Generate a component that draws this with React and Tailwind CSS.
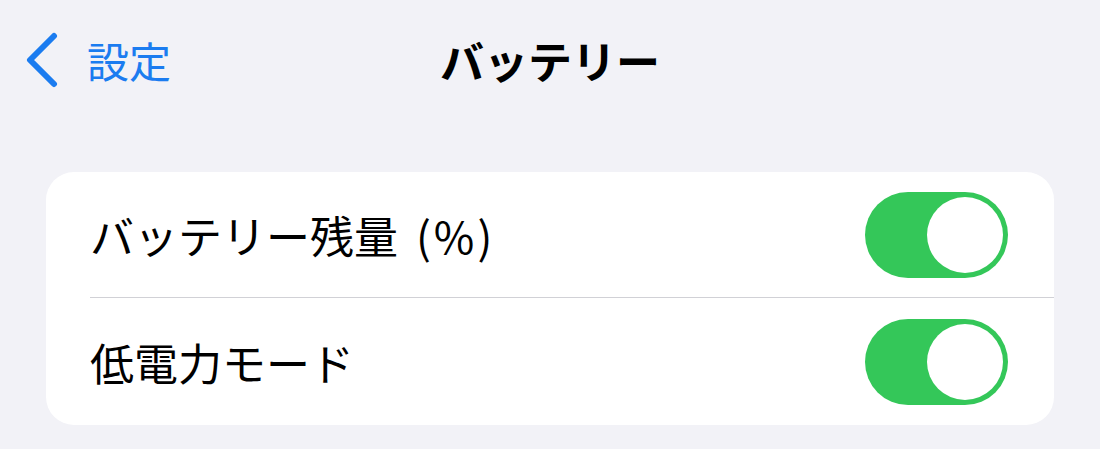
import React, { useState } from "react";

const jp = { fontFamily: '"Noto Sans CJK JP", "Noto Sans", sans-serif' };

const Toggle = ({ on, onChange }) => (
  <button
    type="button"
    onClick={() => onChange(!on)}
    className={`flex h-[86px] w-[143px] items-center rounded-full p-[5px] transition-colors ${
      on ? "justify-end bg-[#34c759]" : "justify-start bg-[#e9e9eb]"
    }`}
  >
    <span className="block h-[76px] w-[76px] rounded-full bg-white" />
  </button>
);

const SettingRow = ({ label, on, onChange, divider, height }) => (
  <div className={`flex items-stretch pl-[44px] ${height}`}>
    <div
      className={`flex flex-1 items-center justify-between pr-[46px] ${
        divider ? "border-t border-[#d1d1d6]" : ""
      }`}
    >
      <span className="text-[44px] leading-none text-black">{label}</span>
      <Toggle on={on} onChange={onChange} />
    </div>
  </div>
);

const App = () => {
  const [showPercent, setShowPercent] = useState(true);
  const [lowPower, setLowPower] = useState(true);

  return (
    <div className="h-[449px] w-full overflow-hidden bg-[#f2f2f7]" style={jp}>
      <header className="grid h-[120px] grid-cols-[1fr_auto_1fr] items-center">
        <button
          type="button"
          className="flex items-center gap-[28px] justify-self-start pl-[25px] text-[#1b7cf0]"
        >
          <svg width="34" height="56" viewBox="0 0 34 56" fill="none">
            <path
              d="M29 4 L5 28 L29 52"
              stroke="currentColor"
              strokeWidth="6"
              strokeLinecap="round"
              strokeLinejoin="round"
            />
          </svg>
          <span className="text-[42px] leading-none">設定</span>
        </button>
        <h1 className="text-[44px] font-bold leading-none text-black">
          バッテリー
        </h1>
        <div />
      </header>

      <section className="mx-[46px] mt-[52px] overflow-hidden rounded-[28px] bg-white">
        <SettingRow
          label={
            <>
              バッテリー残量
              <span className="ml-[18px] tracking-[3px]">(%)</span>
            </>
          }
          on={showPercent}
          onChange={setShowPercent}
          height="h-[125px]"
        />
        <SettingRow
          label="低電力モード"
          on={lowPower}
          onChange={setLowPower}
          divider
          height="h-[128px]"
        />
      </section>
    </div>
  );
};

export default App;
